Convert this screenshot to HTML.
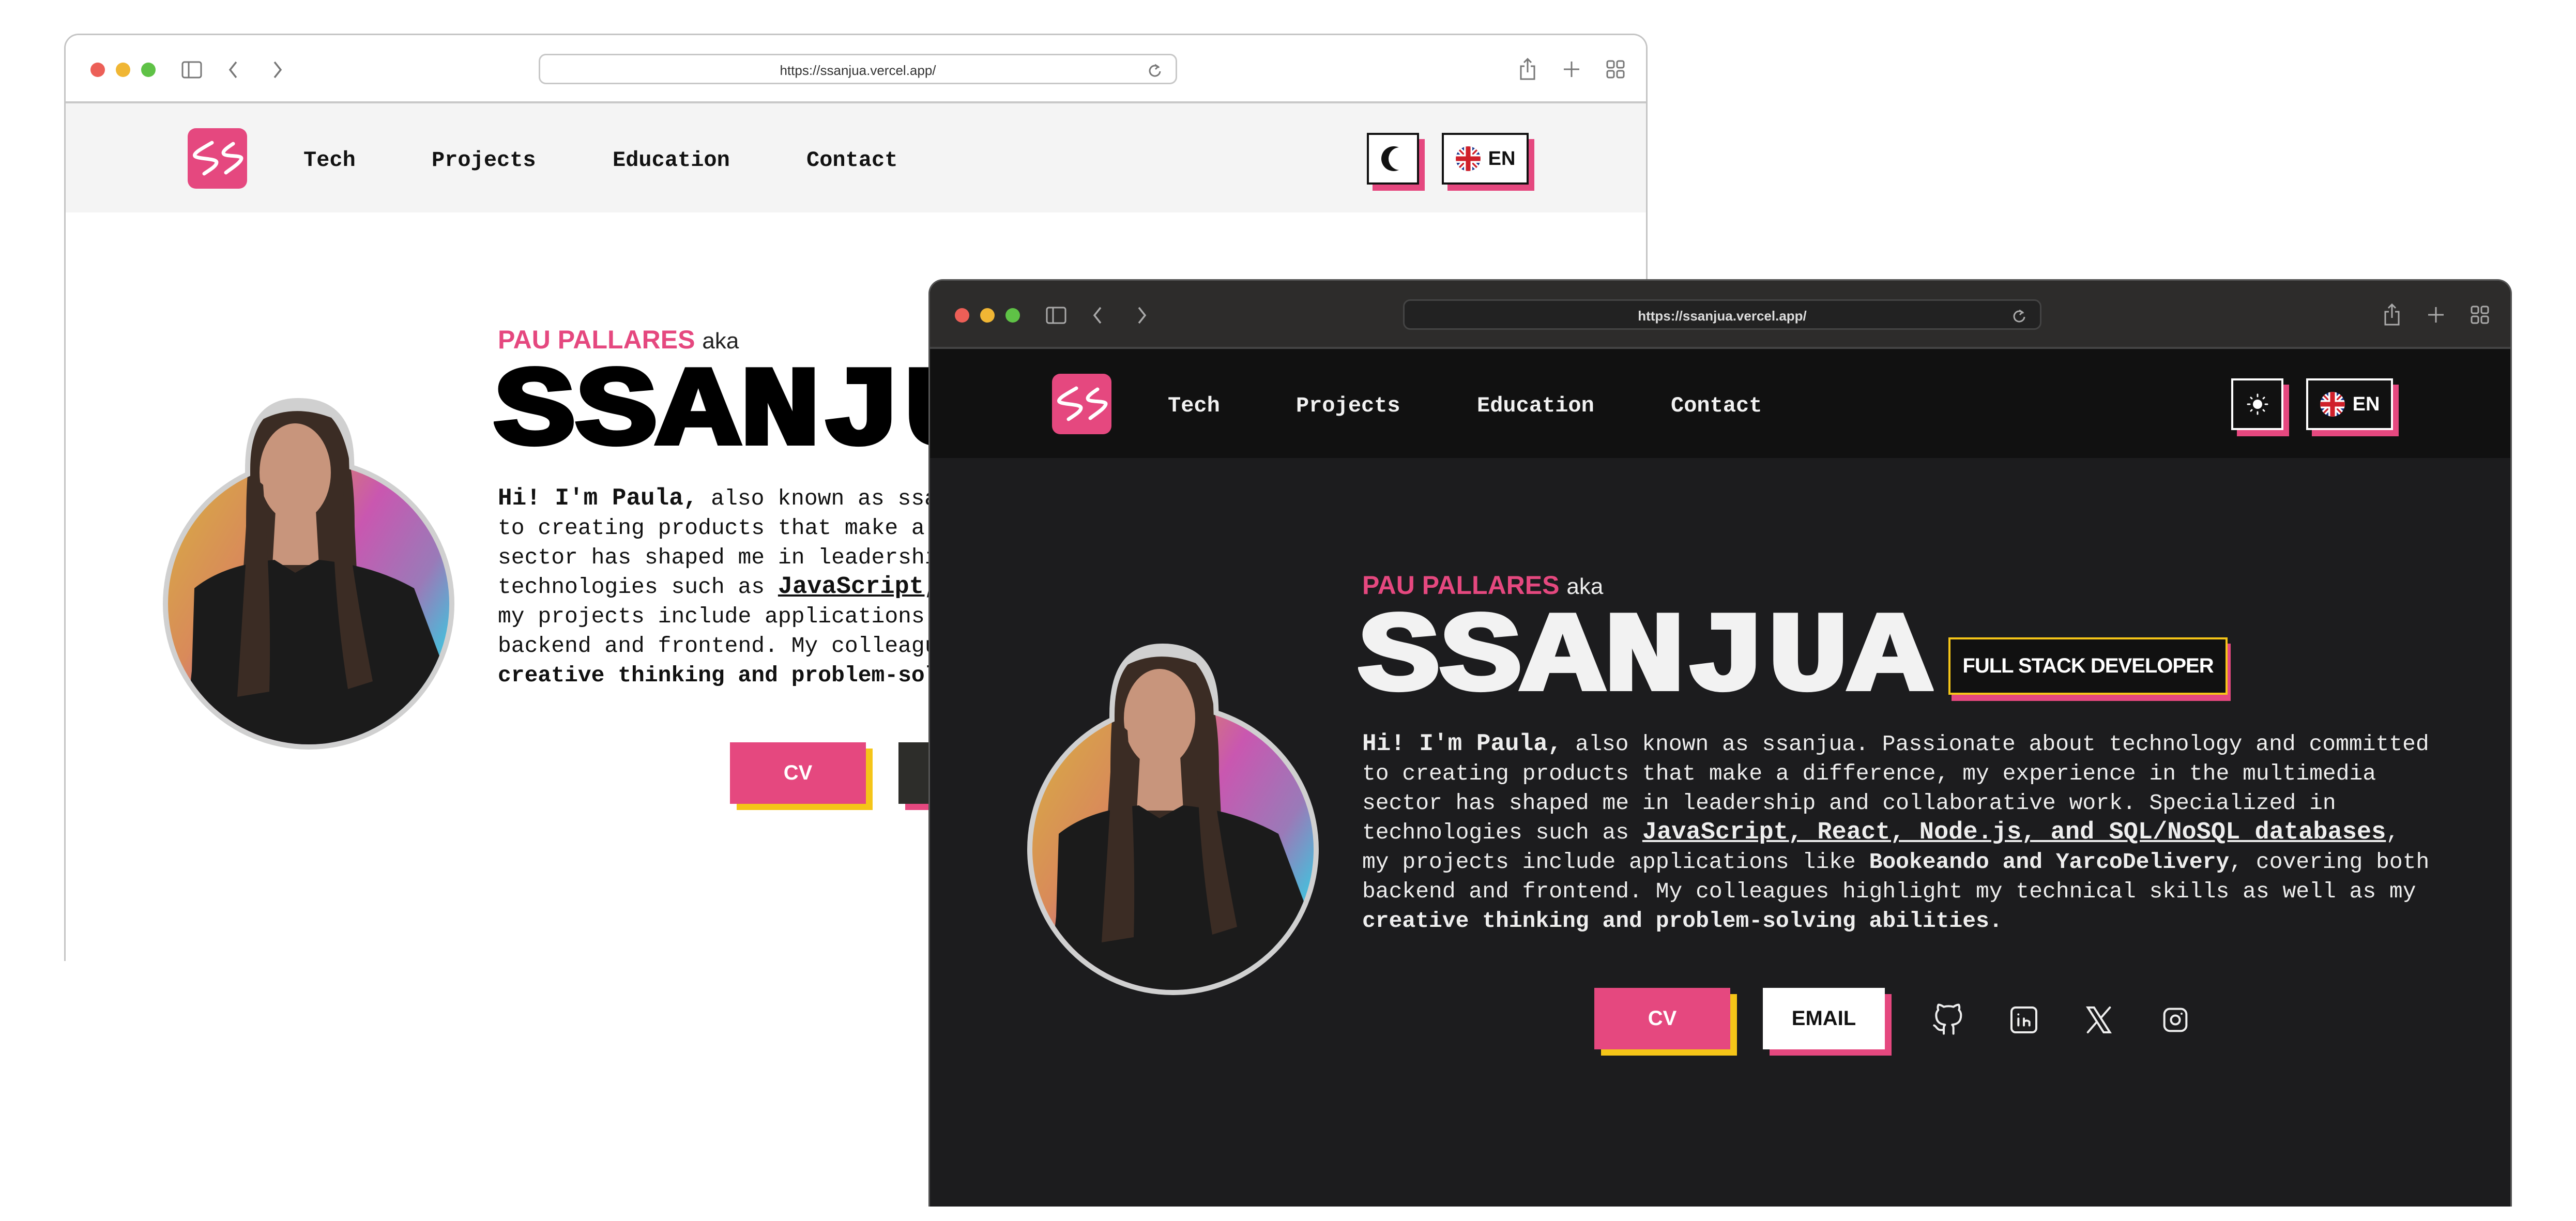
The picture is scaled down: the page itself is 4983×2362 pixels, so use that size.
<!DOCTYPE html>
<html><head><meta charset="utf-8">
<style>
*{margin:0;padding:0;box-sizing:border-box}
html,body{width:4983px;height:2362px;background:#fff;overflow:hidden;position:relative}
.win{position:absolute;width:3063px;height:1794px;overflow:hidden;border-radius:28px 28px 0 0}
.abs{position:absolute}
.light{left:124px;top:65px;border:3px solid #c4c4c4;border-bottom:none;background:#fff}
.dark{left:1796px;top:540px;border:3px solid #555;border-bottom:none;background:#1c1c1e}
.tb{position:absolute;left:0;top:0;right:0;height:132px}
.light .tb{background:#fff;border-bottom:4px solid #c8c8c8}
.dark .tb{background:#2d2c2b;border-bottom:4px solid #444}
.dot{position:absolute;top:53px;width:28px;height:28px;border-radius:50%}
.url{position:absolute;left:915px;top:36px;width:1235px;height:59px;border-radius:14px;font:26px "Liberation Sans",sans-serif;text-align:center;line-height:59px}
.light .url{border:3px solid #c8c8c8;color:#333;background:#fff}
.dark .url{border:3px solid #444;color:#ddd;background:#222;font-weight:bold}
.nav{position:absolute;left:0;right:0;top:132px;height:211px}
.light .nav{background:#f4f4f4}
.dark .nav{background:#111}
.nl{position:absolute;top:85px;font:bold 42px "Liberation Mono",monospace;line-height:50px}
.light .nl{color:#111}.dark .nl{color:#f2f2f2}
.tbtn{position:absolute;top:57px;height:100px;border:4px solid;box-shadow:11px 12px 0 #e5487f;font:bold 38px "Liberation Sans",sans-serif;display:flex;align-items:center;justify-content:center}
.light .tbtn{background:#fff;border-color:#111;color:#111}
.dark .tbtn{background:#111;border-color:#fff;color:#fff}
.pau{position:absolute;left:836px;top:560px;font:bold 50px "Liberation Sans",sans-serif;color:#e5487f;white-space:nowrap}
.pau span{font-weight:normal;font-size:44px}
.light .pau span{color:#222}.dark .pau span{color:#eee}
.big{position:absolute;left:828px;top:608px;font:bold 218px/250px "Liberation Mono",monospace;transform:scaleX(1.21);transform-origin:0 0;letter-spacing:0;-webkit-text-stroke:8px}
.light .big{color:#000}.dark .big{color:#f2f2f2}
.fs{position:absolute;left:1970px;top:690px;width:540px;height:111px;border:4px solid #f5c518;background:#111;color:#fff;box-shadow:6px 12px 0 #e5487f;font:bold 40px "Liberation Sans",sans-serif;display:flex;align-items:center;justify-content:center;letter-spacing:-1px}
.para{position:absolute;left:836px;top:868px;font:43px/57px "Liberation Mono",monospace;white-space:nowrap}
.light .para{color:#111}.dark .para{color:#eee}
.para b{font-weight:bold}
.para .lk{font-size:47px;text-decoration:underline;font-weight:bold}
.btn{position:absolute;top:1368px;height:119px;font:bold 40px "Liberation Sans",sans-serif;display:flex;align-items:center;justify-content:center}
.cv{left:1285px;width:263px;background:#e5487f;color:#fff;box-shadow:13px 12px 0 #f5c518}
.em{left:1611px;width:236px;box-shadow:13px 12px 0 #e5487f}
.light .em{background:#2d2d2a;color:#fff}
.dark .em{background:#fff;color:#111}
.ic{position:absolute;top:1398px;width:64px;height:64px}
</style></head><body>

<!-- LIGHT WINDOW -->
<div class="win light">
 <div class="tb">
  <div class="dot" style="left:48px;background:#ec5f57"></div>
  <div class="dot" style="left:97px;background:#f0b634"></div>
  <div class="dot" style="left:146px;background:#5fc246"></div>
  <svg class="abs" style="left:224px;top:50px" width="40" height="34" viewBox="0 0 40 34" fill="none" stroke="#777" stroke-width="3"><rect x="2" y="2" width="36" height="30" rx="4"/><line x1="14" y1="2" x2="14" y2="32"/></svg>
  <svg class="abs" style="left:312px;top:48px" width="24" height="38" viewBox="0 0 24 38" fill="none" stroke="#777" stroke-width="3.5"><path d="M18 4L6 19L18 34"/></svg>
  <svg class="abs" style="left:398px;top:48px" width="24" height="38" viewBox="0 0 24 38" fill="none" stroke="#777" stroke-width="3.5"><path d="M6 4L18 19L6 34"/></svg>
  <div class="url">https://ssanjua.vercel.app/<svg class="abs" style="right:26px;top:14px" width="28" height="30" viewBox="0 0 28 30" fill="none" stroke="#777" stroke-width="3"><path d="M22 10A10 10 0 1 0 24 17"/><path d="M14 4L20 8L15 13"/></svg></div>
  <svg class="abs" style="left:2810px;top:42px" width="36" height="46" viewBox="0 0 36 46" fill="none" stroke="#777" stroke-width="3"><path d="M12 18H5V43H31V18H24"/><path d="M18 4V30M11 11L18 4L25 11"/></svg>
  <svg class="abs" style="left:2895px;top:48px" width="36" height="36" viewBox="0 0 36 36" stroke="#777" stroke-width="3"><path d="M18 3V33M3 18H33"/></svg>
  <svg class="abs" style="left:2980px;top:48px" width="36" height="36" viewBox="0 0 36 36" fill="none" stroke="#777" stroke-width="3"><rect x="2" y="2" width="13" height="13" rx="3"/><rect x="21" y="2" width="13" height="13" rx="3"/><rect x="2" y="21" width="13" height="13" rx="3"/><rect x="21" y="21" width="13" height="13" rx="3"/></svg>
 </div>
 <div class="nav">
  <svg class="abs" style="left:236px;top:48px" width="115" height="117" viewBox="0 0 115 117"><rect width="115" height="117" rx="16" fill="#e5487f"/><path d="M47 28C30 38 10 48 14 54C20 60 56 58 56 66C56 74 40 82 32 88M88 30C76 38 66 45 70 50C74 55 104 52 104 58C104 66 84 78 74 86" fill="none" stroke="#fff" stroke-width="7" stroke-linecap="round" stroke-linejoin="round"/></svg>
  <div class="nl" style="left:460px">Tech</div>
  <div class="nl" style="left:708px">Projects</div>
  <div class="nl" style="left:1058px">Education</div>
  <div class="nl" style="left:1433px">Contact</div>
  <div class="tbtn" style="left:2517px;width:101px"><svg width="50" height="56" viewBox="0 0 50 56"><circle cx="26" cy="28" r="24" fill="#111"/><circle cx="38" cy="28" r="22" fill="#fff"/></svg></div>
  <div class="tbtn" style="left:2662px;width:168px"><svg width="50" height="50" viewBox="0 0 44 44" style="margin-right:14px"><clipPath id="c1"><circle cx="22" cy="22" r="21"/></clipPath><g clip-path="url(#c1)"><rect width="44" height="44" fill="#1f3a8f"/><path d="M0 0L44 44M44 0L0 44" stroke="#fff" stroke-width="9"/><path d="M0 0L44 44M44 0L0 44" stroke="#d0202a" stroke-width="3"/><path d="M22 0V44M0 22H44" stroke="#fff" stroke-width="14"/><path d="M22 0V44M0 22H44" stroke="#d0202a" stroke-width="8"/></g></svg>EN</div>
 </div>
 <div class="pau">PAU PALLARES <span>aka</span></div>
 <div class="big">SSANJUA</div>
 <div class="para">
  <b style="font-size:46px">Hi! I'm Paula,</b> also known as ssanjua. Passionate about technology and committed<br>
  to creating products that make a difference, my experience in the multimedia<br>
  sector has shaped me in leadership and collaborative work. Specialized in<br>
  technologies such as <span class="lk">JavaScript, React, Node.js, and SQL/NoSQL databases</span>,<br>
  my projects include applications like <b>Bookeando and YarcoDelivery</b>, covering both<br>
  backend and frontend. My colleagues highlight my technical skills as well as my<br>
  <b>creative thinking and problem-solving abilities.</b>
 </div>
 <svg class="abs" style="left:154px;top:690px" width="650" height="710" viewBox="0 0 650 710">
  <defs><linearGradient id="gl" x1="0" y1="0" x2="1" y2="0.6"><stop offset="0" stop-color="#d6b040"/><stop offset="0.35" stop-color="#d98a5a"/><stop offset="0.6" stop-color="#c957b0"/><stop offset="0.85" stop-color="#9a7ab8"/><stop offset="1" stop-color="#4fb8d8"/></linearGradient>
  <clipPath id="cc1"><circle cx="316" cy="410" r="272"/><path d="M203 150Q203 24 296 24Q390 24 394 130L397 220L203 220Z"/></clipPath></defs>
  <circle cx="316" cy="410" r="282" fill="#d0d0d0"/>
  <path d="M193 150Q193 12 296 12Q400 12 404 130L407 220L193 220Z" fill="#d0d0d0"/>
  <circle cx="316" cy="410" r="272" fill="url(#gl)"/>
  <g clip-path="url(#cc1)">
   <path d="M215 60Q280 20 360 50Q405 100 405 260L420 580L175 580L195 260Q195 110 215 60Z" fill="#3b2c24"/>
   <ellipse cx="290" cy="156" rx="69" ry="95" fill="#c8957c"/>
   <path d="M252 230Q290 270 330 230L336 335L246 335Z" fill="#c8957c"/>
   <path d="M95 380Q150 335 250 325L290 350L335 325Q440 335 520 380L580 540L570 720L70 720L90 540Z" fill="#1b1b1b"/>
   <path d="M205 160Q195 320 178 590L240 580Q245 400 228 180Z M380 160Q395 330 440 560L392 575Q362 390 362 180Z" fill="#3b2c24"/>
  </g>
 </svg>
 <div class="btn cv">CV</div>
 <div class="btn em">EMAIL</div>
</div>

<!-- DARK WINDOW -->
<div class="win dark">
 <div class="tb">
  <div class="dot" style="left:48px;background:#ec5f57"></div>
  <div class="dot" style="left:97px;background:#f0b634"></div>
  <div class="dot" style="left:146px;background:#5fc246"></div>
  <svg class="abs" style="left:224px;top:50px" width="40" height="34" viewBox="0 0 40 34" fill="none" stroke="#aaa" stroke-width="3"><rect x="2" y="2" width="36" height="30" rx="4"/><line x1="14" y1="2" x2="14" y2="32"/></svg>
  <svg class="abs" style="left:312px;top:48px" width="24" height="38" viewBox="0 0 24 38" fill="none" stroke="#aaa" stroke-width="3.5"><path d="M18 4L6 19L18 34"/></svg>
  <svg class="abs" style="left:398px;top:48px" width="24" height="38" viewBox="0 0 24 38" fill="none" stroke="#aaa" stroke-width="3.5"><path d="M6 4L18 19L6 34"/></svg>
  <div class="url">https://ssanjua.vercel.app/<svg class="abs" style="right:26px;top:14px" width="28" height="30" viewBox="0 0 28 30" fill="none" stroke="#aaa" stroke-width="3"><path d="M22 10A10 10 0 1 0 24 17"/><path d="M14 4L20 8L15 13"/></svg></div>
  <svg class="abs" style="left:2810px;top:42px" width="36" height="46" viewBox="0 0 36 46" fill="none" stroke="#aaa" stroke-width="3"><path d="M12 18H5V43H31V18H24"/><path d="M18 4V30M11 11L18 4L25 11"/></svg>
  <svg class="abs" style="left:2895px;top:48px" width="36" height="36" viewBox="0 0 36 36" stroke="#aaa" stroke-width="3"><path d="M18 3V33M3 18H33"/></svg>
  <svg class="abs" style="left:2980px;top:48px" width="36" height="36" viewBox="0 0 36 36" fill="none" stroke="#aaa" stroke-width="3"><rect x="2" y="2" width="13" height="13" rx="3"/><rect x="21" y="2" width="13" height="13" rx="3"/><rect x="2" y="21" width="13" height="13" rx="3"/><rect x="21" y="21" width="13" height="13" rx="3"/></svg>
 </div>
 <div class="nav">
  <svg class="abs" style="left:236px;top:48px" width="115" height="117" viewBox="0 0 115 117"><rect width="115" height="117" rx="16" fill="#e5487f"/><path d="M47 28C30 38 10 48 14 54C20 60 56 58 56 66C56 74 40 82 32 88M88 30C76 38 66 45 70 50C74 55 104 52 104 58C104 66 84 78 74 86" fill="none" stroke="#fff" stroke-width="7" stroke-linecap="round" stroke-linejoin="round"/></svg>
  <div class="nl" style="left:460px">Tech</div>
  <div class="nl" style="left:708px">Projects</div>
  <div class="nl" style="left:1058px">Education</div>
  <div class="nl" style="left:1433px">Contact</div>
  <div class="tbtn" style="left:2517px;width:101px"><svg width="44" height="44" viewBox="0 0 44 44" fill="#fff" stroke="#fff" stroke-width="3" stroke-linecap="round"><circle cx="22" cy="22" r="9" stroke="none"/><path d="M22 3V7M22 37V41M3 22H7M37 22H41M9 9L11 11M33 33L35 35M9 35L11 33M33 11L35 9"/></svg></div>
  <div class="tbtn" style="left:2662px;width:168px"><svg width="50" height="50" viewBox="0 0 44 44" style="margin-right:14px"><clipPath id="c2"><circle cx="22" cy="22" r="21"/></clipPath><g clip-path="url(#c2)"><rect width="44" height="44" fill="#1f3a8f"/><path d="M0 0L44 44M44 0L0 44" stroke="#fff" stroke-width="9"/><path d="M0 0L44 44M44 0L0 44" stroke="#d0202a" stroke-width="3"/><path d="M22 0V44M0 22H44" stroke="#fff" stroke-width="14"/><path d="M22 0V44M0 22H44" stroke="#d0202a" stroke-width="8"/></g></svg>EN</div>
 </div>
 <div class="pau">PAU PALLARES <span>aka</span></div>
 <div class="big">SSANJUA</div>
 <div class="fs">FULL STACK DEVELOPER</div>
 <div class="para">
  <b style="font-size:46px">Hi! I'm Paula,</b> also known as ssanjua. Passionate about technology and committed<br>
  to creating products that make a difference, my experience in the multimedia<br>
  sector has shaped me in leadership and collaborative work. Specialized in<br>
  technologies such as <span class="lk">JavaScript, React, Node.js, and SQL/NoSQL databases</span>,<br>
  my projects include applications like <b>Bookeando and YarcoDelivery</b>, covering both<br>
  backend and frontend. My colleagues highlight my technical skills as well as my<br>
  <b>creative thinking and problem-solving abilities.</b>
 </div>
 <svg class="abs" style="left:154px;top:690px" width="650" height="710" viewBox="0 0 650 710">
  <defs><linearGradient id="gd" x1="0" y1="0" x2="1" y2="0.6"><stop offset="0" stop-color="#d6b040"/><stop offset="0.35" stop-color="#d98a5a"/><stop offset="0.6" stop-color="#c957b0"/><stop offset="0.85" stop-color="#9a7ab8"/><stop offset="1" stop-color="#4fb8d8"/></linearGradient>
  <clipPath id="cc2"><circle cx="316" cy="410" r="272"/><path d="M203 150Q203 24 296 24Q390 24 394 130L397 220L203 220Z"/></clipPath></defs>
  <circle cx="316" cy="410" r="282" fill="#d0d0d0"/>
  <path d="M193 150Q193 12 296 12Q400 12 404 130L407 220L193 220Z" fill="#d0d0d0"/>
  <circle cx="316" cy="410" r="272" fill="url(#gd)"/>
  <g clip-path="url(#cc2)">
   <path d="M215 60Q280 20 360 50Q405 100 405 260L420 580L175 580L195 260Q195 110 215 60Z" fill="#3b2c24"/>
   <ellipse cx="290" cy="156" rx="69" ry="95" fill="#c8957c"/>
   <path d="M252 230Q290 270 330 230L336 335L246 335Z" fill="#c8957c"/>
   <path d="M95 380Q150 335 250 325L290 350L335 325Q440 335 520 380L580 540L570 720L70 720L90 540Z" fill="#1b1b1b"/>
   <path d="M205 160Q195 320 178 590L240 580Q245 400 228 180Z M380 160Q395 330 440 560L392 575Q362 390 362 180Z" fill="#3b2c24"/>
  </g>
 </svg>
 <div class="btn cv">CV</div>
 <div class="btn em">EMAIL</div>
 <svg class="ic" style="left:1937px" viewBox="0 0 24 24" fill="none" stroke="#eee" stroke-width="1.5" stroke-linecap="round" stroke-linejoin="round"><path d="M9 19c-5 1.5-5-2.5-7-3m14 6v-3.9a3.4 3.4 0 0 0-.9-2.6c3.1-.3 6.4-1.5 6.4-7A5.4 5.4 0 0 0 20 4.8 5 5 0 0 0 19.9 1S18.7.7 16 2.5a13.4 13.4 0 0 0-7 0C6.3.7 5.1 1 5.1 1A5 5 0 0 0 5 4.8a5.4 5.4 0 0 0-1.5 3.7c0 5.4 3.3 6.6 6.4 7a3.4 3.4 0 0 0-.9 2.6V22"/></svg>
 <svg class="ic" style="left:2084px" viewBox="0 0 24 24" fill="none" stroke="#eee" stroke-width="1.5" stroke-linecap="round"><rect x="3" y="3" width="18" height="18" rx="3"/><path d="M8 11V16M8 8V8.01M12 16V11M16 16V13.5A2.5 2.5 0 0 0 12 13.5"/></svg>
 <svg class="ic" style="left:2229px" viewBox="0 0 24 24" fill="none" stroke="#eee" stroke-width="1.5" stroke-linecap="round"><path d="M4 3L15.5 21H20L8.5 3Z M4 21L10.5 13.5M20 3L13.5 10.5"/></svg>
 <svg class="ic" style="left:2377px" viewBox="0 0 24 24" fill="none" stroke="#eee" stroke-width="1.5" stroke-linecap="round"><rect x="4" y="4" width="16" height="16" rx="4"/><circle cx="12" cy="12" r="3.2"/><path d="M16.5 7.5V7.51"/></svg>
</div>
</body></html>
